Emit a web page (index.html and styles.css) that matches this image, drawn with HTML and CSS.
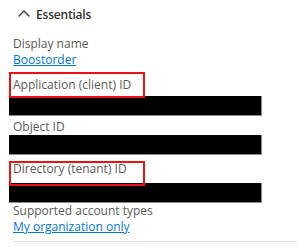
FILE: index.html
```html
<!DOCTYPE html>
<html lang="en">
<head>
<meta charset="utf-8">
<title>Essentials</title>
<link rel="stylesheet" href="styles.css">
</head>
<body>
<section class="panel">
  <div class="header">
    <svg class="chev" width="12" height="20" viewBox="0 0 12 20" aria-hidden="true">
      <polyline points="1,11 6,6 11,11" fill="none" stroke="#323130" stroke-width="1.3" stroke-linecap="round" stroke-linejoin="round"/>
    </svg>
    <span class="title">Essentials</span>
  </div>
  <div class="fields">
    <div class="field field-text">
      <div class="label">Display name</div>
      <a class="link" href="#">Boostorder</a>
    </div>
    <div class="field">
      <div class="label marked marked-a">Application (client) ID</div>
      <div class="slot"><div class="redact redact-a"></div></div>
    </div>
    <div class="field">
      <div class="label">Object ID</div>
      <div class="slot"><div class="redact redact-b"></div></div>
    </div>
    <div class="field">
      <div class="label marked marked-b">Directory (tenant) ID</div>
      <div class="slot"><div class="redact redact-c"></div></div>
    </div>
    <div class="field field-last">
      <div class="label">Supported account types</div>
      <a class="link" href="#">My organization only</a>
    </div>
  </div>
  <div class="divider"></div>
</section>
</body>
</html>
```
FILE: styles.css
```css
* { box-sizing: border-box; }
html, body { margin: 0; padding: 0; background: #ffffff; }
body {
  font-family: "Open Sans", "Noto Sans", sans-serif;
  font-size: 12px;
  color: #605e5c;
}
.panel {
  padding-left: 13px;
}
.header {
  display: flex;
  align-items: center;
  margin-top: 5px;
  height: 20px;
  padding-left: 5px;
}
.chev { display: block; flex: none; }
.title {
  margin-left: 6px;
  font-size: 12px;
  font-weight: 600;
  letter-spacing: -0.2px;
  line-height: 20px;
  color: #323130;
}
.fields {
  display: flex;
  flex-direction: column;
  margin-top: 11px;
}
.field {
  display: flex;
  flex-direction: column;
  align-items: flex-start;
}
.label {
  position: relative;
  line-height: 16px;
  height: 16px;
  color: #5c5a58;
  white-space: nowrap;
}
.link {
  line-height: 16px;
  height: 16px;
  color: #0078d4;
  text-decoration: underline;
  white-space: nowrap;
}
.field-text .link { margin-bottom: 9px; }
.slot { height: 26px; width: 100%; }
.redact {
  margin-left: -4px;
  width: 253px;
  height: 20px;
  background: #000000;
  border-right: 1px solid #8a8a8a;
  border-bottom: 1px solid #8a8a8a;
}
.redact-a { margin-top: 3px; }
.redact-b { margin-top: 0; }
.redact-c { margin-top: 6px; }
.marked::after {
  content: "";
  position: absolute;
  left: -4px;
  width: 132px;
  border: 2px solid #ee1111;
}
.marked-a::after { top: -5px; height: 22px; }
.marked-b::after { top: 0; height: 21px; }
.divider {
  margin-top: 6px;
  height: 1px;
  background: #e1dfdd;
}
```
